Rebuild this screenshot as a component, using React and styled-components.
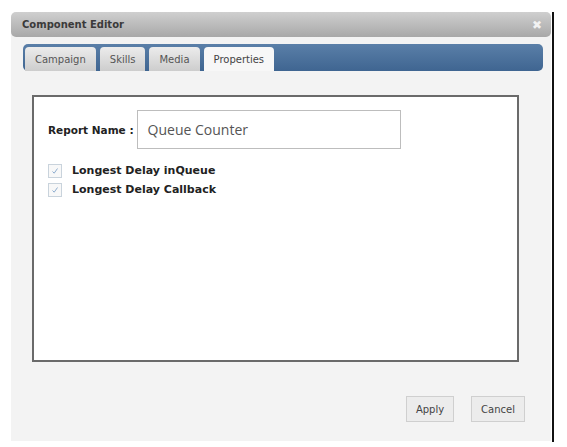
import React from 'react'
import styled, { createGlobalStyle } from 'styled-components'

const GlobalStyle = createGlobalStyle`
    body {
        margin: 0;
        background: #ffffff;
        font-family: "DejaVu Sans", Verdana, sans-serif;
    }
`

const Page = styled.div`
    display: flex;
    padding: 12px 0 0 11px;
`

const Frame = styled.div`
    display: flex;
    padding-right: 1px;
    border-right: 2px solid #111;
    height: 430px;
`

const Dialog = styled.div`
    width: 540px;
    height: 429px;
    display: flex;
    flex-direction: column;
    background: #f3f3f3;
    border-radius: 5px 5px 0 0;
`

const TitleBar = styled.div`
    height: 25px;
    display: flex;
    align-items: center;
    justify-content: space-between;
    padding: 0 9px 0 11px;
    border-radius: 5px;
    background: linear-gradient(#cfcfcf, #a8a8a8);
    box-sizing: border-box;
`

const Title = styled.span`
    font-size: 10px;
    font-weight: bold;
    color: #3a3a3a;
`

const Close = styled.span`
    font-size: 12px;
    font-weight: bold;
    color: #f2f2f2;
    line-height: 1;
    text-shadow: 0 0 1px #bbb;
`

const Body = styled.div`
    flex: 1;
    display: flex;
    flex-direction: column;
    padding: 7px 8px 0 12px;
`

const TabBar = styled.div`
    height: 27px;
    display: flex;
    align-items: flex-end;
    gap: 4px;
    padding-left: 2px;
    border-radius: 5px;
    background: linear-gradient(#5a7fa8, #3f6591);
    box-sizing: border-box;
`

const Tab = styled.div`
    height: 24px;
    display: flex;
    align-items: center;
    padding: 0 10px;
    font-size: 10px;
    color: ${p => (p.active ? '#444' : '#555')};
    border-radius: 4px 4px 0 0;
    background: ${p => (p.active ? '#f7f7f7' : 'linear-gradient(#ececec, #cdcdcd)')};
    box-sizing: border-box;
`

const Panel = styled.div`
    margin: 24px 0 0 9px;
    width: 487px;
    height: 267px;
    box-sizing: border-box;
    border: 2px solid #6a6a6a;
    background: #ffffff;
    padding: 13px 14px;
    display: flex;
    flex-direction: column;
`

const NameRow = styled.div`
    display: flex;
    align-items: center;
    gap: 3px;
`

const Label = styled.span`
    font-size: 10.5px;
    font-weight: bold;
    color: #222;
`

const NameInput = styled.div`
    width: 264px;
    height: 39px;
    box-sizing: border-box;
    border: 1px solid #bdbdbd;
    display: flex;
    align-items: center;
    padding-left: 10px;
    font-family: "Open Sans", sans-serif;
    font-size: 14px;
    color: #555;
`

const Checks = styled.div`
    margin-top: 14px;
    display: flex;
    flex-direction: column;
    gap: 4px;
`

const CheckRow = styled.div`
    display: flex;
    align-items: center;
    gap: 10px;
    height: 15px;
`

const Box = styled.span`
    width: 14px;
    height: 14px;
    box-sizing: border-box;
    border: 1px solid #c9d3dc;
    background: #f8f8f8;
    display: flex;
    align-items: center;
    justify-content: center;
`

const CheckText = styled.span`
    font-size: 11px;
    font-weight: bold;
    color: #222;
`

const Footer = styled.div`
    display: flex;
    justify-content: flex-end;
    gap: 17px;
    margin-top: 34px;
    padding-right: 18px;
`

const Button = styled.div`
    height: 26px;
    padding: 0 9px;
    box-sizing: border-box;
    border: 1px solid #cfcfcf;
    background: #ececec;
    display: flex;
    align-items: center;
    font-size: 10px;
    color: #444;
`

const Tick = () => (
    <svg width="8" height="8" viewBox="0 0 8 8">
        <path d="M1.5 4.5 L3.2 6.2 L6.5 1.5" fill="none" stroke="#8eadcf" strokeWidth="1" />
    </svg>
)

const App = () => {

    const tabs = ['Campaign', 'Skills', 'Media', 'Properties']
    const checks = ['Longest Delay inQueue', 'Longest Delay Callback']

    return (
        <Page>
            <GlobalStyle />
            <Frame>
                <Dialog>
                    <TitleBar>
                        <Title>Component Editor</Title>
                        <Close>✖</Close>
                    </TitleBar>
                    <Body>
                        <TabBar>
                            {tabs.map(t => (
                                <Tab key={t} active={t === 'Properties'}>{t}</Tab>
                            ))}
                        </TabBar>
                        <Panel>
                            <NameRow>
                                <Label>Report Name :</Label>
                                <NameInput>Queue Counter</NameInput>
                            </NameRow>
                            <Checks>
                                {checks.map(c => (
                                    <CheckRow key={c}>
                                        <Box><Tick /></Box>
                                        <CheckText>{c}</CheckText>
                                    </CheckRow>
                                ))}
                            </Checks>
                        </Panel>
                        <Footer>
                            <Button>Apply</Button>
                            <Button>Cancel</Button>
                        </Footer>
                    </Body>
                </Dialog>
            </Frame>
        </Page>
    )
}

export default App
